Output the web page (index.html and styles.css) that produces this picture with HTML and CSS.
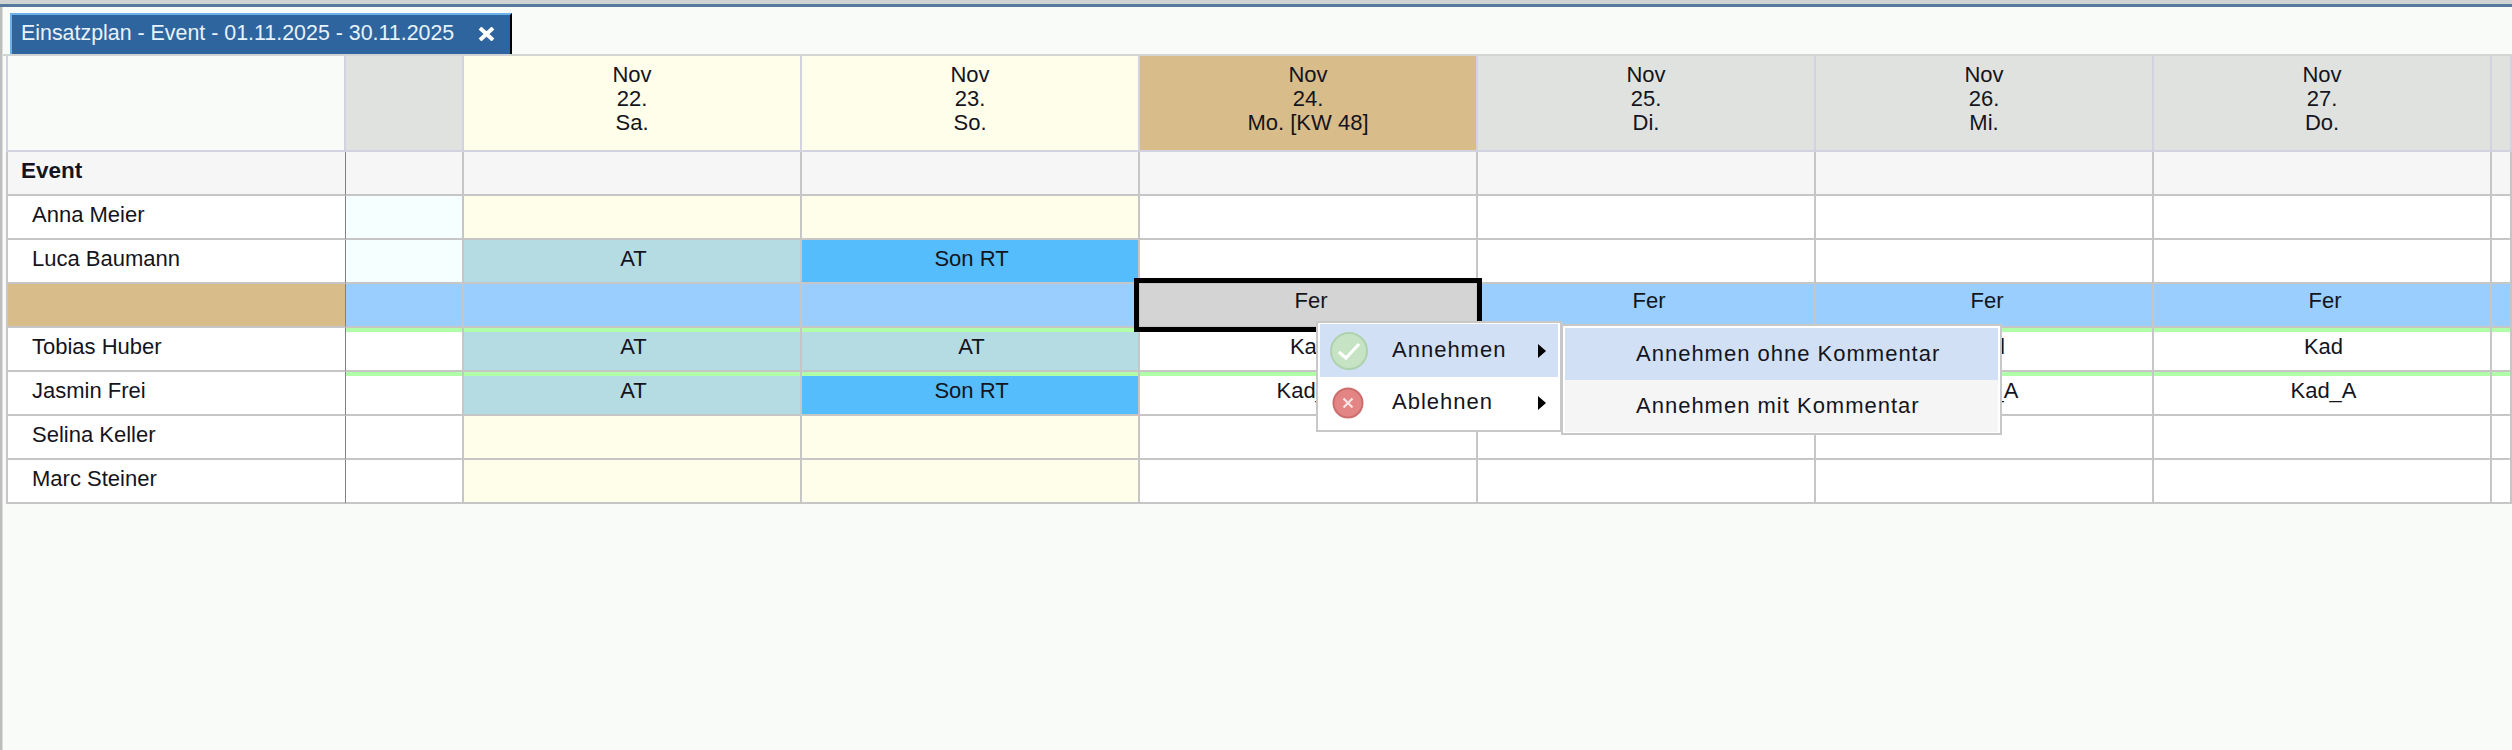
FILE: index.html
```html
<!DOCTYPE html>
<html lang="de">
<head>
<meta charset="utf-8">
<title>Einsatzplan</title>
<link rel="stylesheet" href="styles.css">
</head>
<body>
<div class="topbar"></div>
<div class="shell">
  <div class="inner">
    <div class="tabstrip">
      <div class="tab">
        <span class="tab-title">Einsatzplan - Event - 01.11.2025 - 30.11.2025</span>
        <span class="tab-close">
          <svg width="17" height="14" viewBox="0 0 17 14"><path d="M2 1 L15 13 M15 1 L2 13" stroke="#fff" stroke-width="4" fill="none"/></svg>
        </span>
      </div>
    </div>
    <div class="plan">
      <!-- Kopfzeile -->
      <div class="c h first h-name"></div>
      <div class="c h h-grey"></div>
      <div class="c h h-weekend">Nov<br>22.<br>Sa.</div>
      <div class="c h h-weekend">Nov<br>23.<br>So.</div>
      <div class="c h h-today">Nov<br>24.<br>Mo. [KW 48]</div>
      <div class="c h h-grey">Nov<br>25.<br>Di.</div>
      <div class="c h h-grey">Nov<br>26.<br>Mi.</div>
      <div class="c h h-grey">Nov<br>27.<br>Do.</div>
      <div class="c h h-grey"></div>
      <!-- Event -->
      <div class="c first name event name-sep">Event</div>
      <div class="c event"></div><div class="c event"></div><div class="c event"></div><div class="c event"></div><div class="c event"></div><div class="c event"></div><div class="c event"></div><div class="c event"></div>
      <!-- Anna -->
      <div class="c first name name-sep">Anna Meier</div>
      <div class="c ice"></div><div class="c weekend"></div><div class="c weekend"></div><div class="c"></div><div class="c"></div><div class="c"></div><div class="c"></div><div class="c"></div>
      <!-- Luca -->
      <div class="c first name name-sep">Luca Baumann</div>
      <div class="c ice"></div><div class="c at">AT</div><div class="c rt">Son RT</div><div class="c"></div><div class="c"></div><div class="c"></div><div class="c"></div><div class="c"></div>
      <!-- Markierte Zeile -->
      <div class="c first name name-sep sel-name"></div>
      <div class="c fer"></div><div class="c fer"></div><div class="c fer"></div><div class="c fer fer-active">Fer</div><div class="c fer">Fer</div><div class="c fer">Fer</div><div class="c fer">Fer</div><div class="c fer"></div>
      <!-- Tobias -->
      <div class="c first name name-sep">Tobias Huber</div>
      <div class="c strip"></div><div class="c at strip">AT</div><div class="c at strip">AT</div><div class="c strip">Kad</div><div class="c strip">Kad</div><div class="c strip">Kad</div><div class="c strip">Kad</div><div class="c strip"></div>
      <!-- Jasmin -->
      <div class="c first name name-sep">Jasmin Frei</div>
      <div class="c strip"></div><div class="c at strip">AT</div><div class="c rt strip">Son RT</div><div class="c strip">Kad_A</div><div class="c strip">Kad_A</div><div class="c strip">Kad_A</div><div class="c strip">Kad_A</div><div class="c strip"></div>
      <!-- Selina -->
      <div class="c first name name-sep">Selina Keller</div>
      <div class="c"></div><div class="c weekend"></div><div class="c weekend"></div><div class="c"></div><div class="c"></div><div class="c"></div><div class="c"></div><div class="c"></div>
      <!-- Marc -->
      <div class="c first name name-sep">Marc Steiner</div>
      <div class="c"></div><div class="c weekend"></div><div class="c weekend"></div><div class="c"></div><div class="c"></div><div class="c"></div><div class="c"></div><div class="c"></div>
    </div>
  </div>
</div>

<div class="menu menu-main">
  <div class="item item-hover">
    <span class="icon">
      <svg width="40" height="40" viewBox="-20 -20 40 40"><circle r="18" fill="#c6e4c4" stroke="#aed2ae" stroke-width="2"/><path d="M-10 1 L-3 7 L10 -7" fill="none" stroke="#fff" stroke-width="3.2"/></svg>
    </span>
    <span class="label">Annehmen</span>
    <span class="arrow"></span>
  </div>
  <div class="item">
    <span class="icon">
      <svg width="40" height="40" viewBox="-20 -20 40 40"><circle cx="-1" cy="0" r="14.5" fill="#e38585" stroke="#cc6e6e" stroke-width="2"/><path d="M-5.5 -4.5 L3.5 4.5 M3.5 -4.5 L-5.5 4.5" fill="none" stroke="#fbe4e4" stroke-width="2.2"/></svg>
    </span>
    <span class="label">Ablehnen</span>
    <span class="arrow"></span>
  </div>
</div>

<div class="menu menu-sub">
  <div class="subitem subitem-hover">Annehmen ohne Kommentar</div>
  <div class="subitem">Annehmen mit Kommentar</div>
</div>
</body>
</html>
```

FILE: styles.css
```css
* { box-sizing: border-box; }

html, body {
  margin: 0;
  height: 750px;
  overflow: hidden;
}

body {
  background: #f9fbf9;
  font-family: "Liberation Sans", Arial, sans-serif;
  font-size: 22px;
  color: #14141c;
  display: flex;
  flex-direction: column;
}

.topbar {
  height: 7px;
  flex: none;
  background: #d0d3d4;
  border-bottom: 3px solid #557a9a;
}

.shell {
  flex: 1;
  border-left: 2px solid #bdbdbd;
}

.inner {
  height: 100%;
  border-left: 1px solid #dedede;
}

.tabstrip {
  height: 49px;
  padding: 6px 0 0 7px;
  border-bottom: 2px solid #d4d4d4;
}

.tab {
  width: 502px;
  height: 41px;
  display: flex;
  align-items: center;
  background: #2e659f;
  border-top: 2px solid #6cb2ea;
  border-left: 2px solid #6cb2ea;
  border-right: 2px solid #000;
  color: #e8f2fa;
  padding: 0 0 2px 9px;
}

.tab-title {
  width: 438px;
  white-space: nowrap;
  font-size: 21.4px;
}

.tab-close {
  display: flex;
  margin-left: 19px;
}

.plan {
  margin-left: 3px;
  display: grid;
  grid-template-columns: 340px 118px repeat(6, 338px) 20px;
  grid-template-rows: 96px repeat(8, 44px);
}

.c {
  background: #fff;
  border-right: 2px solid #c6c6c6;
  border-bottom: 2px solid #c6c6c6;
  text-align: center;
  line-height: 25px;
  padding-top: 6px;
  padding-left: 3px;
  white-space: nowrap;
}

.first { border-left: 2px solid #c6c6c6; }

.h {
  padding-top: 7px;
  padding-left: 0;
  line-height: 24px;
  border-color: #d2d2e0;
}

.h-name { background: #f9fbf9; }
.h-grey { background: #e0e2df; }
.h-weekend { background: #fffeea; }
.h-today { background: #d8bc8a; }

.name {
  text-align: left;
  padding-left: 24px;
}

.name-sep { border-right: 1px solid #808080; }

.event { background: #f6f6f6; }
.event.name {
  font-weight: bold;
  font-size: 22.5px;
  padding-left: 13px;
}

.ice { background: #f5ffff; }
.weekend { background: #fffeea; }
.at { background: #b5dce3; }
.rt { background: #55bdfb; }
.sel-name { background: #d8bc8a; }
.fer { background: #99ceff; padding-top: 4px; padding-left: 6px; }
.strip { box-shadow: inset 0 4px 0 #b0ffa8; }

.fer-active {
  background: #d4d4d4;
  position: relative;
  z-index: 1;
}

.fer-active::after {
  content: "";
  position: absolute;
  inset: -6px;
  border: 5px solid #000;
}

.menu {
  position: absolute;
  z-index: 2;
  background: #fff;
  border: 2px solid #c8c8c8;
}

.menu-main {
  left: 1316px;
  top: 321px;
  width: 246px;
  height: 111px;
  padding: 1px 2px;
}

.item {
  height: 52px;
  display: flex;
  align-items: center;
  position: relative;
}

.item-hover { background: #d1e0f5; height: 53px; }

.icon {
  display: flex;
  margin-left: 9px;
  width: 63px;
}

.label {
  letter-spacing: 1px;
  width: 146px;
  padding-bottom: 2px;
}

.arrow {
  width: 0;
  height: 0;
  border-left: 8px solid #000;
  border-top: 7px solid transparent;
  border-bottom: 7px solid transparent;
}

.menu-sub {
  left: 1561px;
  top: 324px;
  width: 441px;
  height: 111px;
  padding: 2px;
}

.subitem {
  height: 52px;
  background: #f5f5f5;
  padding: 13px 0 0 71px;
  line-height: 25px;
  letter-spacing: 1px;
  white-space: nowrap;
}

.subitem-hover { background: #d1e0f5; }
```
